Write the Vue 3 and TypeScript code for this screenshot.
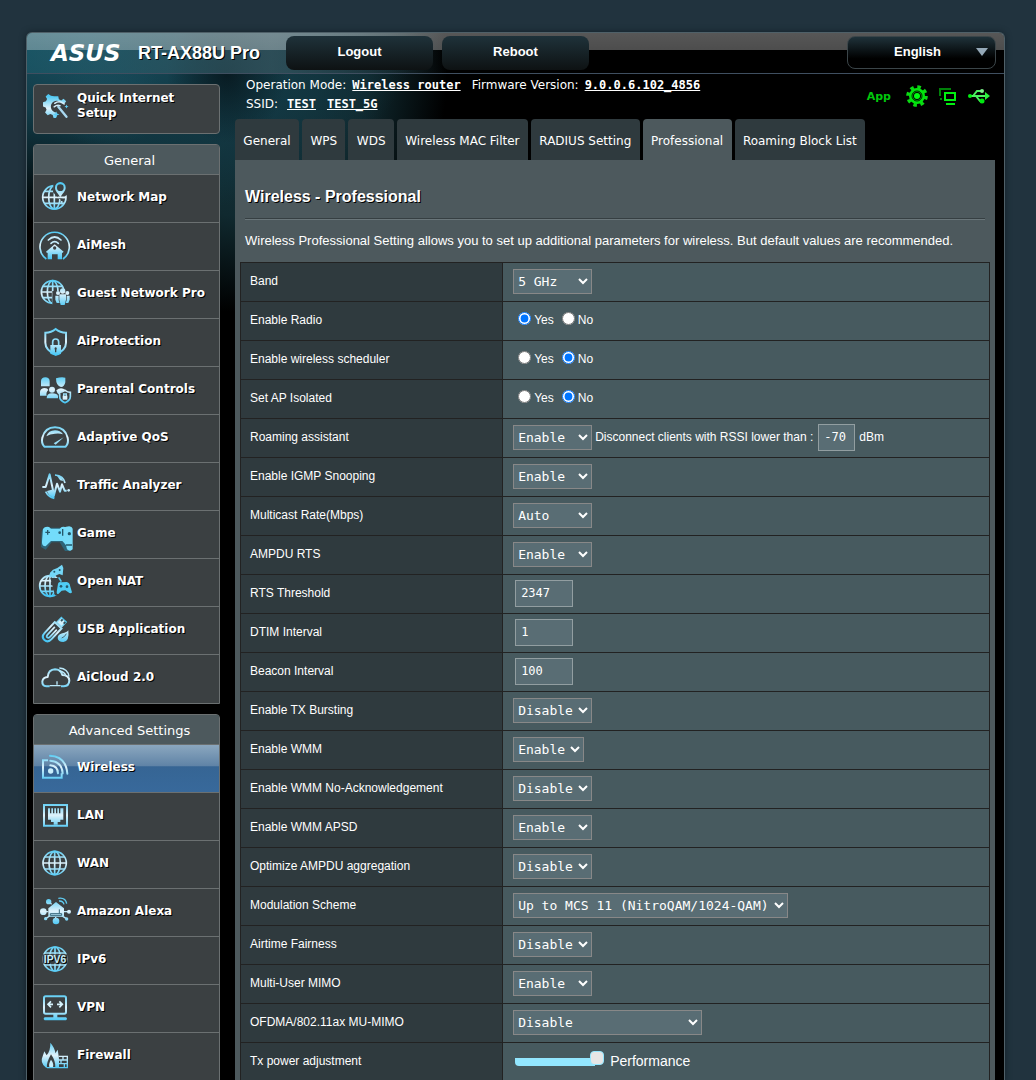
<script setup lang="ts">
import { ref, reactive } from 'vue'

interface MenuItem {
  label: string
  icon: string
  active?: boolean
}

interface SettingRow {
  id: string
  label: string
  kind: 'select' | 'radio' | 'text' | 'roaming' | 'range'
  options?: string[]
}

const G = 'url(#sky)'
const globe = (cx: number, cy: number, r: number, w = 5): string => {
  const k = Math.round(r * 0.48)
  const h = Math.round(r * 0.5)
  const d = Math.round(r * 0.86)
  return `<g fill="none" stroke="${G}" stroke-width="${w}"><circle cx="${cx}" cy="${cy}" r="${r}"/><ellipse cx="${cx}" cy="${cy}" rx="${k}" ry="${r}"/><path d="M${cx} ${cy - r}V${cy + r}M${cx - r} ${cy}H${cx + r}M${cx - d} ${cy - h}H${cx + d}M${cx - d} ${cy + h}H${cx + d}"/></g>`
}

const icons = {
  wizard: `<g transform="translate(11 9) scale(.88)"><path fill="${G}" fill-rule="evenodd" d="M42 14h14l2 10 8 4 8-6 9 9-5 7-10 1a20 20 0 1 0-19 30l2 10-3 9H40l-3-10-8-4-9 5-9-10 5-9-3-8-9-3V34l10-3 4-8-5-8 9-9 9 6z" transform="translate(4 4)"/><path fill="none" stroke="#d4eefb" stroke-width="5" stroke-linecap="round" d="M48 42q16-12 32 2M46 54q10-8 20-4"/><path stroke="#a8d8f0" stroke-width="8" stroke-linecap="round" d="M60 54l28 34"/><path fill="#5fcdf5" d="M53 70l3 7 8 3-8 3-3 8-3-8-8-3 8-3zM88 46l2 5 5 2-5 2-2 5-2-5-5-2 5-2z"/></g>`,
  map: `${globe(52, 55, 35)}<path fill="#3b4042" d="M50 0h44v44L70 62 48 40z"/><path fill="${G}" fill-rule="evenodd" d="M70 9a16 16 0 0 1 16 17c0 11-10 17-16 29-6-12-16-18-16-29A16 16 0 0 1 70 9zm0 7a10 10 0 1 0 0 20 10 10 0 0 0 0-20z"/><path fill="none" stroke="${G}" stroke-width="5" d="M62 55h24M74 76v-10"/>`,
  mesh: `<path fill="none" stroke="${G}" stroke-width="5" d="M28 96A44 44 0 1 1 78 96"/><path fill="none" stroke="#c8ecfb" stroke-width="5" stroke-linecap="round" d="M34 39q19-18 38 0M42 49q11-10 22 0"/><path fill="${G}" fill-rule="evenodd" d="M53 52l27 22-4 4-1-1v20H62V82H45v15H32V77l-2 1-3-4zm0 6a5 5 0 1 0 0 10 5 5 0 0 0 0-10z"/>`,
  guest: `${globe(47, 51, 34)}<path fill="#3b4042" d="M46 48h52v44H46z"/><g fill="${G}"><circle cx="77" cy="48" r="8"/><circle cx="63" cy="54" r="6"/><circle cx="91" cy="54" r="6"/><path d="M67 58h20v16l-4 16H71l-4-16zM55 62h10v14l3 8h-9l-4-10zM89 62h9v12l-4 10h-8l3-8z"/></g>`,
  shield: `<path fill="none" stroke="${G}" stroke-width="6" d="M56 18q13 11 31 11v30q0 22-31 36Q25 81 25 59V29q18 0 31-11z"/><path fill="none" stroke="#8fdcf8" stroke-width="5" d="M47 67V57a9 9 0 0 1 18 0v10"/><path fill="${G}" fill-rule="evenodd" d="M40 66h32v26q-6 4-16 6-9-3-16-6zm16 7a4 4 0 0 0-2 7v8h4v-8a4 4 0 0 0-2-7z"/>`,
  family: `<g fill="${G}"><path d="M12 46V30q1-11 13-11t13 11v16zM9 74V62q2-11 14-11 9 0 11 6-8 8-5 17zM57 22q16-5 28-2v14q-3 14-13 14-15-3-15-26zM58 58q14-12 28 0v5q-12 3-18 9-8-3-10-14z"/><circle cx="45" cy="56" r="9"/><path d="M29 82q0-15 16-15t18 8v7z"/></g><path fill="#3b4042" stroke="${G}" stroke-width="5" d="M84 58q8 6 16 6v13q0 11-16 18-16-7-16-18V64q8 0 16-6z"/><path fill="none" stroke="#9adff8" stroke-width="4" d="M80 76v-7h8v7"/><path fill="#d8f2fc" d="M77 74h14v12H77z"/>`,
  gauge: `<path fill="none" stroke="${G}" stroke-width="6" stroke-linejoin="round" d="M22 83Q12 72 16 56 24 25 54 25t38 31q4 16-6 27z"/><path fill="${G}" d="M28 52Q34 34 54 34q16 0 24 12-10-4-24-2-16 1-26 8z"/><path fill="#9be0f8" d="M50 73l30-18-24 22z"/>`,
  traffic: `<path fill="none" stroke="${G}" stroke-width="5" d="M54 24q26 2 30 24M26 74q8 16 26 20"/><path fill="${G}" d="M55 23q18 2 24 18-10 2-13-6t-11-12zM30 72l14-4 10 10-2 14Q34 88 30 72z"/><path fill="none" stroke="${G}" stroke-width="6" stroke-linejoin="round" d="M16 60h10l12-38 13 62 9-34 9 24 6-22 8 19h6"/><circle cx="95" cy="70" r="4" fill="#c4ebfa"/>`,
  game: `<path fill="#16a9dc" opacity=".35" d="M14 50q4-20 26-12h62v70H84L68 82H44L26 104 12 96z"/><path fill="#73dcfb" d="M18 42q6-9 18-6l6 5h26l6-5q12-3 18 5l10 43q1 12-10 12L76 78H42L26 94q-13 0-11-15z"/><path fill="#79ddfa" d="M76 39q28-12 31 2v62q-8 8-17 0l-4-16q-10-18-10-48z"/><path fill="none" stroke="#25586b" stroke-width="4" d="M32 45v14M25 52h14M77 42v20M87 90h18"/><circle cx="68" cy="53" r="4" fill="#25586b"/><circle cx="97" cy="56" r="5" fill="#25586b"/>`,
  nat: `${globe(39, 69, 31)}<path fill="#3b4042" d="M40 45h56v52H54z"/><path d="M39 29l9-9 13-5 14-10 4 10-2 22-10-4-9 4-9 8-12-5z" fill="#74d7f7"/><path fill="#4fcdf5" d="M63 62q2-7 10-4l16-1q9 1 11 14l5 17q-4 6-12-1l-8-5-11 1-10 10q-7 2-4-12z"/><path stroke="#57c8ee" stroke-width="5" d="M65 43l8 13"/><circle cx="52" cy="26" r="3" fill="#25586b"/><circle cx="68" cy="21" r="3" fill="#25586b"/><circle cx="72" cy="70" r="4" fill="#25586b"/><circle cx="90" cy="71" r="4" fill="#25586b"/>`,
  usb: `<g transform="rotate(43 51 56)" fill="none" stroke="${G}"><path stroke-width="6" d="M37 38h28v44q0 16-14 16T37 82z"/><path stroke-width="5" d="M47 48v32q0 7 5 7t5-7V50"/><path fill="#d4f0fb" stroke-width="4" d="M42 14h20v20H42z"/></g><path fill="${G}" d="M94 58q4 34-15 35-16 0-17-12 0-10 14-14 14-3 18-9z"/><path stroke="#4a6975" stroke-width="3" fill="none" d="M88 68q-4 10-14 13"/><path fill="#31525f" d="M70 28l5-5 4 4-5 5zM78 36l5-5 4 4-5 5z"/>`,
  cloud: `<path fill="none" stroke="${G}" stroke-width="6" stroke-linejoin="round" d="M38 82H28Q15 80 16 67q2-12 16-13 2-22 22-23 17 0 22 17 20 0 21 17-1 16-16 17h-9"/><path fill="none" stroke="#bce9fa" stroke-width="4" d="M38 80h33M60 67v10M67 27q26 2 29 26M67 36q16 2 20 15"/>`,
  wifi: `<g fill="none" stroke="${G}" stroke-width="6"><path d="M33 34H18v52h56V73"/><path stroke-linecap="round" d="M39 20q48 2 52 54M40 35q35 3 37 38M40 49q22 2 23 24"/></g><circle cx="41" cy="66" r="8" fill="#c9eefb"/>`,
  lan: `<path fill="none" stroke="${G}" stroke-width="6" d="M21 24h69v62H21z"/><path fill="${G}" fill-rule="evenodd" d="M33 34h46v34h-9v7H62v8H50v-8h-8v-7h-9zm6 0v15h4V34zm9 0v15h4V34zm9 0v15h4V34zm9 0v15h4V34z"/>`,
  wan: globe(53, 54, 35),
  alexa: `<g stroke="#bde8f9" stroke-width="4"><path d="M34 26l10 8M20 56h14M74 56h20M56 72v14M26 77l12-8M74 68l14 9"/></g><g fill="${G}"><circle cx="35" cy="26" r="8"/><circle cx="19" cy="56" r="10"/><circle cx="96" cy="56" r="6"/><circle cx="57" cy="84" r="10"/><circle cx="26" cy="77" r="5"/><circle cx="89" cy="78" r="5"/><path d="M57 27l24 19v25H34V46z"/></g><path fill="none" stroke="#38677a" stroke-width="3" d="M40 62h34v5H40zM67 49v12"/><path fill="none" stroke="#5fcdf3" stroke-width="4" d="M64 16q22-3 25 16M66 24q12-1 15 10"/>`,
  ipv6: `${globe(54, 54, 36)}<path fill="#3b4042" d="M16 40h76v28H16z"/><text x="54" y="65" text-anchor="middle" font-family="Liberation Sans, sans-serif" font-weight="700" font-size="31" fill="#c9eefb">IPV6</text>`,
  vpn: `<rect x="21" y="22" width="66" height="52" rx="5" fill="none" stroke="${G}" stroke-width="6"/><path fill="${G}" d="M49 74h12v11h26q6 4 0 9H23q-6-5 0-9h26z"/><path fill="none" stroke="#d5f2fc" stroke-width="5" d="M48 46H34M60 46h15M42 37l-9 9 9 9M67 37l9 9-9 9"/>`,
  firewall: `<path fill="${G}" d="M40 17q14 16 15 32l7-11q4 23 4 30v24H27Q7 78 18 55l4-12 7 12q12-15 11-38z"/><path fill="#3b4042" d="M42 52q14 20 13 40H30q-3-13 12-40z"/><path fill="#c5eefc" d="M42 68q10 12 5 24h-9q-5-10 4-24z"/><path fill="none" stroke="${G}" stroke-width="4" d="M65 58h26v34H64M30 92h36M64 69h27M64 80h27M78 58v11M72 69v11M82 80v12"/>`
}

const general: MenuItem[] = [
  { label: 'Network Map', icon: icons.map },
  { label: 'AiMesh', icon: icons.mesh },
  { label: 'Guest Network Pro', icon: icons.guest },
  { label: 'AiProtection', icon: icons.shield },
  { label: 'Parental Controls', icon: icons.family },
  { label: 'Adaptive QoS', icon: icons.gauge },
  { label: 'Traffic Analyzer', icon: icons.traffic },
  { label: 'Game', icon: icons.game },
  { label: 'Open NAT', icon: icons.nat },
  { label: 'USB Application', icon: icons.usb },
  { label: 'AiCloud 2.0', icon: icons.cloud }
]

const advanced: MenuItem[] = [
  { label: 'Wireless', icon: icons.wifi, active: true },
  { label: 'LAN', icon: icons.lan },
  { label: 'WAN', icon: icons.wan },
  { label: 'Amazon Alexa', icon: icons.alexa },
  { label: 'IPv6', icon: icons.ipv6 },
  { label: 'VPN', icon: icons.vpn },
  { label: 'Firewall', icon: icons.firewall }
]

const sections = [
  { title: 'General', items: general },
  { title: 'Advanced Settings', items: advanced }
]

const tabs = ['General', 'WPS', 'WDS', 'Wireless MAC Filter', 'RADIUS Setting', 'Professional', 'Roaming Block List']
const activeTab = ref('Professional')
const language = ref('English')

const onOff = ['Disable', 'Enable']
const rows: SettingRow[] = [
  { id: 'band', label: 'Band', kind: 'select', options: ['2.4 GHz', '5 GHz'] },
  { id: 'radio', label: 'Enable Radio', kind: 'radio' },
  { id: 'scheduler', label: 'Enable wireless scheduler', kind: 'radio' },
  { id: 'isolated', label: 'Set AP Isolated', kind: 'radio' },
  { id: 'roaming', label: 'Roaming assistant', kind: 'roaming', options: onOff },
  { id: 'igmp', label: 'Enable IGMP Snooping', kind: 'select', options: onOff },
  { id: 'multicast', label: 'Multicast Rate(Mbps)', kind: 'select', options: ['Auto', 'OFDM 12'] },
  { id: 'ampdu', label: 'AMPDU RTS', kind: 'select', options: onOff },
  { id: 'rts', label: 'RTS Threshold', kind: 'text' },
  { id: 'dtim', label: 'DTIM Interval', kind: 'text' },
  { id: 'beacon', label: 'Beacon Interval', kind: 'text' },
  { id: 'bursting', label: 'Enable TX Bursting', kind: 'select', options: onOff },
  { id: 'wmm', label: 'Enable WMM', kind: 'select', options: ['Auto', 'Enable'] },
  { id: 'noack', label: 'Enable WMM No-Acknowledgement', kind: 'select', options: onOff },
  { id: 'apsd', label: 'Enable WMM APSD', kind: 'select', options: onOff },
  { id: 'aggregation', label: 'Optimize AMPDU aggregation', kind: 'select', options: onOff },
  { id: 'modulation', label: 'Modulation Scheme', kind: 'select', options: ['Up to MCS 9 (802.11ac)', 'Up to MCS 11 (NitroQAM/1024-QAM)'] },
  { id: 'airtime', label: 'Airtime Fairness', kind: 'select', options: onOff },
  { id: 'mumimo', label: 'Multi-User MIMO', kind: 'select', options: onOff },
  { id: 'ofdma', label: 'OFDMA/802.11ax MU-MIMO', kind: 'select', options: ['Disable', 'DL/UL OFDMA + MU-MIMO'] },
  { id: 'txpower', label: 'Tx power adjustment', kind: 'range' }
]

const values = reactive<Record<string, string>>({
  band: '5 GHz',
  radio: 'Yes',
  scheduler: 'No',
  isolated: 'No',
  roaming: 'Enable',
  igmp: 'Enable',
  multicast: 'Auto',
  ampdu: 'Enable',
  rts: '2347',
  dtim: '1',
  beacon: '100',
  bursting: 'Disable',
  wmm: 'Enable',
  noack: 'Disable',
  apsd: 'Enable',
  aggregation: 'Disable',
  modulation: 'Up to MCS 11 (NitroQAM/1024-QAM)',
  airtime: 'Disable',
  mumimo: 'Enable',
  ofdma: 'Disable',
  txpower: '100'
})
const rssi = ref('-70')
</script>

<template>
  <div class="page">
    <svg class="defs" width="0" height="0" aria-hidden="true">
      <defs>
        <linearGradient id="sky" gradientUnits="userSpaceOnUse" x1="0" y1="14" x2="0" y2="96">
          <stop offset="0" stop-color="#4fc9f3" />
          <stop offset=".5" stop-color="#dff2fb" />
          <stop offset="1" stop-color="#45c6f5" />
        </linearGradient>
      </defs>
    </svg>

    <div class="frame">
      <header class="top">
        <div class="brand">
          <span class="logo">ASUS</span>
          <span class="model">RT-AX88U Pro</span>
        </div>
        <button type="button" class="top-btn">Logout</button>
        <button type="button" class="top-btn">Reboot</button>
        <div class="lang">
          <select v-model="language" aria-label="Language">
            <option>English</option>
          </select>
          <svg class="lang-arrow" width="12" height="8" viewBox="0 0 12 8" aria-hidden="true"><path d="M0 0h12L6 8z" fill="#95a9b8" /></svg>
        </div>
      </header>

      <div class="body">
        <nav class="side">
          <a href="#" class="quick">
            <svg class="icon" viewBox="0 0 108 108" aria-hidden="true" v-html="icons.wizard"></svg>
            <span>Quick Internet Setup</span>
          </a>
          <section v-for="s in sections" :key="s.title" class="group">
            <h2>{{ s.title }}</h2>
            <a v-for="i in s.items" :key="i.label" href="#" class="item" :class="{ active: i.active }">
              <svg class="icon" viewBox="0 0 108 108" aria-hidden="true" v-html="i.icon"></svg>
              <span>{{ i.label }}</span>
            </a>
          </section>
        </nav>

        <main class="main">
          <div class="status">
            <div class="info">
              <div>
                <span>Operation Mode:</span><a href="#">Wireless router</a>
                <span class="fw">Firmware Version:</span><a href="#">9.0.0.6.102_4856</a>
              </div>
              <div class="ssid"><span>SSID:</span><a href="#">TEST</a><a href="#">TEST_5G</a></div>
            </div>
            <div class="tray">
              <a href="#" class="app">App</a>
              <svg width="24" height="24" viewBox="0 0 24 24" fill="none" aria-label="Wireless status">
                <circle cx="12" cy="12" r="9" stroke="#0bd813" stroke-width="3.6" stroke-dasharray="3.5 3.57" />
                <circle cx="12" cy="12" r="6" stroke="#00e60c" stroke-width="4" />
                <circle cx="12" cy="12" r="5" stroke="#001c00" />
                <circle cx="12" cy="12" r="3" fill="#00ff10" />
              </svg>
              <svg width="18" height="18" viewBox="0 0 18 18" fill="none" aria-label="Clients">
                <path d="M12 2H1v7M2 11v2" stroke="#008009" stroke-width="2" />
                <path d="M6 6h10v7H6zM7 17h9" stroke="#00f010" stroke-width="2" />
              </svg>
              <svg width="23" height="18" viewBox="0 0 23 18" fill="none" aria-label="USB">
                <path d="M3 9h17M6 9l4-5h4M9 9l4 5h3" stroke="#4bf060" stroke-width="2" />
                <circle cx="3" cy="9" r="2" fill="#00f010" />
                <circle cx="15" cy="4" r="2" fill="#7df08a" />
                <path d="M18 5l5 4-5 4z" fill="#2bf03c" />
                <circle cx="15" cy="14" r="2.5" fill="#00e810" />
              </svg>
            </div>
          </div>

          <div class="tabs">
            <a v-for="t in tabs" :key="t" href="#" :class="{ on: t === activeTab }" @click.prevent="activeTab = t">{{ t }}</a>
          </div>

          <div class="panel">
            <h1>Wireless - Professional</h1>
            <p>Wireless Professional Setting allows you to set up additional parameters for wireless. But default values are recommended.</p>
            <table>
              <tbody>
                <tr v-for="r in rows" :key="r.id">
                  <th scope="row"><label :for="r.id">{{ r.label }}</label></th>
                  <td>
                    <div class="cell">
                      <select v-if="r.kind === 'select' || r.kind === 'roaming'" :id="r.id" v-model="values[r.id]">
                        <option v-for="o in r.options" :key="o">{{ o }}</option>
                      </select>
                      <template v-if="r.kind === 'roaming'">
                        <label for="rssi" class="hint">Disconnect clients with RSSI lower than :</label>
                        <input id="rssi" v-model="rssi" type="text" class="rssi" />
                        <span class="unit">dBm</span>
                      </template>
                      <template v-if="r.kind === 'radio'">
                        <label v-for="v in ['Yes', 'No']" :key="v" class="radio">
                          <input :id="v === 'Yes' ? r.id : undefined" v-model="values[r.id]" type="radio" :name="r.id" :value="v" />
                          <span>{{ v }}</span>
                        </label>
                      </template>
                      <input v-if="r.kind === 'text'" :id="r.id" v-model="values[r.id]" type="text" class="num" />
                      <template v-if="r.kind === 'range'">
                        <input :id="r.id" v-model="values[r.id]" type="range" min="0" max="100" />
                        <span class="perf">Performance</span>
                      </template>
                    </div>
                  </td>
                </tr>
              </tbody>
            </table>
          </div>
        </main>
      </div>
    </div>
  </div>
</template>

<style>
html {
  background: #21333e;
}
body {
  margin: 0;
}
</style>

<style scoped>
* {
  box-sizing: border-box;
}
a {
  color: inherit;
  text-decoration: none;
}
.page {
  min-height: 100vh;
  padding: 32px 31px 0 26px;
  background: #21333e;
  color: #fff;
  font-family: "Liberation Sans", Arial, sans-serif;
  font-size: 12px;
}
.defs {
  position: absolute;
}
.frame {
  border: 1px solid #4f6068;
  border-bottom: 0;
  border-radius: 6px 6px 0 0;
  background:
    radial-gradient(ellipse 60px 70px at 200px 40px, rgba(4, 14, 19, 0.7), transparent),
    radial-gradient(ellipse 60px 46px at 80px 68px, rgba(28, 80, 96, 0.6), transparent),
    radial-gradient(ellipse 330px 190px at 60px 0, #1a5364 0, #123a46 45%, rgba(0, 0, 0, 0) 100%),
    radial-gradient(ellipse 200px 240px at 220px 40px, #153a45 0, #10292f 60%, rgba(0, 0, 0, 0) 100%),
    #000;
  box-shadow: 0 0 6px #14212a;
}
.top {
  display: flex;
  align-items: flex-start;
  height: 41px;
  padding: 3px 8px 0 0;
  border-bottom: 1px solid #3f4f60;
  border-radius: 5px 5px 0 0;
  background:
    linear-gradient(rgba(255, 255, 255, 0.34), rgba(255, 255, 255, 0.3)) top / 100% 17px no-repeat,
    linear-gradient(90deg, rgba(30, 96, 112, 0.5), rgba(52, 84, 94, 0.8) 25%, rgba(40, 62, 70, 0.5) 35%, transparent 43%);
}
.brand {
  display: flex;
  align-items: center;
  width: 259px;
  height: 34px;
  padding-left: 24px;
}
.logo {
  width: 87px;
  font: italic 700 23px/34px "DejaVu Sans", Verdana, sans-serif;
}
.model {
  font-size: 18px;
  font-weight: 700;
  text-shadow: 1px 1px 0 #000;
}
.top-btn {
  width: 147px;
  height: 34px;
  margin-right: 9px;
  padding: 0 0 4px;
  border: 0;
  border-radius: 8px;
  background: linear-gradient(#1f323a, #0e1213);
  color: #fff;
  font: 700 13px "Liberation Sans", Arial, sans-serif;
}
.lang {
  position: relative;
  width: 149px;
  height: 33px;
  margin-left: auto;
}
.lang select {
  appearance: none;
  width: 100%;
  height: 100%;
  padding: 0 8px 2px 0;
  border: 1px solid #3b4549;
  border-radius: 8px;
  background: linear-gradient(#1f323a, #000 70%);
  color: #fff;
  font: 700 13px "Liberation Sans", Arial, sans-serif;
  text-align: center;
  text-align-last: center;
}
.lang-arrow {
  position: absolute;
  top: 12px;
  right: 8px;
}
.body {
  display: flex;
  gap: 15px;
  padding: 0 9px 0 6px;
}
.side {
  display: flex;
  flex: none;
  flex-direction: column;
  gap: 10px;
  width: 187px;
  padding-top: 10px;
  font-family: "DejaVu Sans", Verdana, sans-serif;
}
.quick,
.item {
  display: flex;
  align-items: center;
  padding-left: 3px;
  font-size: 12px;
  font-weight: 700;
  line-height: 15px;
  text-shadow: 1px 1px 0 #000;
}
.quick {
  height: 50px;
  padding-bottom: 6px;
  padding-right: 32px;
  border: 1px solid #6b7071;
  border-radius: 4px;
  background: #3b4042;
}
.icon {
  flex: none;
  width: 36px;
  height: 36px;
  margin-right: 4px;
}
.group {
  padding-bottom: 1px;
  border: 1px solid #6b7071;
  border-radius: 4px 4px 0 0;
  background: #3b4042;
}
.group h2 {
  height: 29px;
  margin: 0;
  padding-left: 6px;
  background: #4d595d;
  font-size: 13px;
  font-weight: 400;
  line-height: 31px;
  text-align: center;
}
.item {
  height: 48px;
  padding-bottom: 4px;
  border-top: 1px solid #6b7071;
}
.item span {
  padding-top: 2px;
}
.item.active {
  background: linear-gradient(#8ba7bf, #5f83a6 45%, #366594 46%, #38699b);
}
.main {
  flex: 1;
  min-width: 0;
}
.status {
  display: flex;
  justify-content: space-between;
  height: 45px;
  padding: 2px 5px 0 11px;
  font: 12px/19px "DejaVu Sans", Verdana, sans-serif;
}
.info a {
  margin: 0 4px 0 6px;
  font: 700 12px/19px "DejaVu Sans Mono", monospace;
  text-decoration: underline;
}
.info .fw {
  margin-left: 7px;
}
.ssid span {
  margin-right: 3px;
}
.ssid a {
  margin-right: 5px;
}
.tray {
  display: flex;
  align-items: center;
  gap: 10px;
  height: 40px;
}
.app {
  margin-right: 4px;
  color: #00c80c;
  font-weight: 700;
  font-size: 11px;
}
.tabs {
  display: flex;
  gap: 3px;
  width: 630px;
}
.tabs a {
  flex: 1 0 auto;
  height: 41px;
  padding: 0 8px;
  border-radius: 4px 4px 0 0;
  background: #2f3a3e;
  font: 12px/45px "DejaVu Sans", Verdana, sans-serif;
  text-align: center;
  white-space: nowrap;
}
.tabs a.on {
  background: #4d595d;
}
.panel {
  padding: 26px 5px 0;
  background: #4d595d;
}
h1 {
  margin: 0 5px;
  padding: 0 0 10px;
  border-bottom: 1px solid #363f42;
  box-shadow: 0 1px 0 #6a767a;
  font-size: 16px;
  line-height: 22px;
  text-shadow: 1px 1px 0 #000;
}
p {
  margin: 13px 5px 12px;
  font-size: 13px;
  line-height: 18px;
}
table {
  width: 100%;
  border-collapse: collapse;
  table-layout: fixed;
}
th,
td {
  height: 39px;
  padding: 0 10px 2px;
  border: 1px solid #222;
  font-weight: 400;
  text-align: left;
}
th {
  width: 35%;
  padding-left: 9px;
  background: #2f3a3e;
}
td {
  background: #475a5f;
}
.cell {
  display: flex;
  align-items: center;
}
.cell select {
  height: 25px;
  padding: 0 2px 0 0;
  border: 1px solid #888;
  border-radius: 0;
  background: #596d74;
  color: #fff;
  font: 13px "DejaVu Sans Mono", monospace;
}
.hint {
  margin: 0 5px 0 3px;
}
.unit {
  margin-left: 4px;
}
.num,
.rssi {
  height: 27px;
  padding: 0 5px;
  border: 1px solid #929ea1;
  background: #596d74;
  color: #fff;
  font: 12px "DejaVu Sans Mono", monospace;
}
.num {
  width: 58px;
  margin-left: 2px;
}
.rssi {
  width: 37px;
}
.radio {
  display: flex;
  align-items: center;
  margin-right: 7px;
}
.radio input {
  width: 13px;
  height: 13px;
  margin: 0 3px 4px 5px;
}
.radio + .radio input {
  margin-left: 1px;
}
input[type="range"] {
  appearance: none;
  width: 89px;
  height: 15px;
  margin: 0 0 6px 2px;
  background: linear-gradient(#93e7ff, #93e7ff) 0 7px / 80px 8px no-repeat;
  border-radius: 4px;
}
input[type="range"]::-webkit-slider-thumb {
  appearance: none;
  width: 14px;
  height: 14px;
  border: 1px solid #93e7ff;
  border-radius: 4px;
  background: #e6e6e6;
}
.perf {
  margin-left: 6px;
  font-size: 14px;
}
</style>
